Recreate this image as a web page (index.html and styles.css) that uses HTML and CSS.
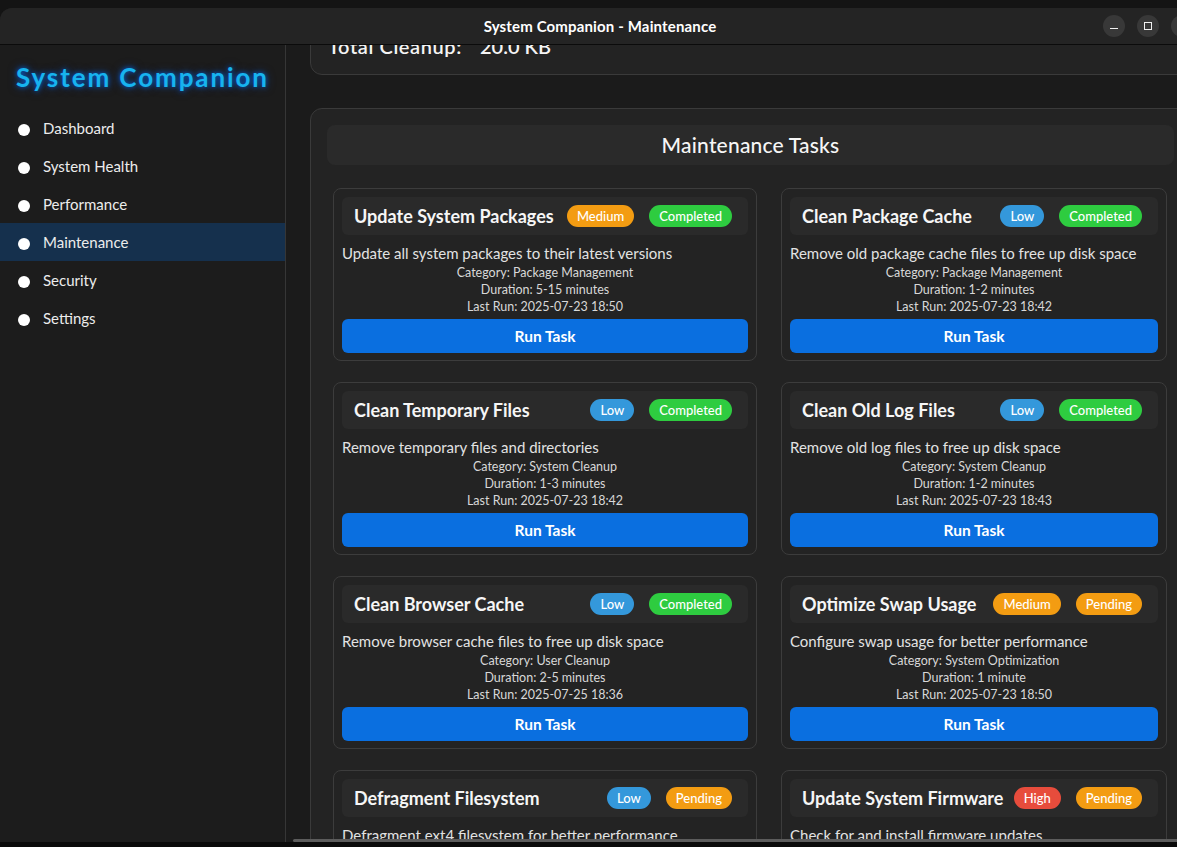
FILE: index.html
```html
<!DOCTYPE html>
<html lang="en">
<head>
<meta charset="utf-8">
<title>System Companion - Maintenance</title>
<link rel="stylesheet" href="styles.css">
</head>
<body>
<div class="desktop">
  <div class="window">
    <header class="titlebar">
      <span class="title">System Companion - Maintenance</span>
      <div class="controls">
        <span class="ctl"><span class="min-line"></span></span>
        <span class="ctl"><span class="max-box"></span></span>
        <span class="ctl"><span class="close-x">×</span></span>
      </div>
    </header>
    <div class="content">
      <aside class="sidebar">
        <div class="logo">System Companion</div>
        <nav class="nav">
          <div class="nav-item"><span class="dot"></span>Dashboard</div>
          <div class="nav-item"><span class="dot"></span>System Health</div>
          <div class="nav-item"><span class="dot"></span>Performance</div>
          <div class="nav-item active"><span class="dot"></span>Maintenance</div>
          <div class="nav-item"><span class="dot"></span>Security</div>
          <div class="nav-item"><span class="dot"></span>Settings</div>
        </nav>
      </aside>
      <main class="main">
        <div class="scroller">
          <section class="card summary">
            <div class="summary-row"><span class="summary-label">Total Cleanup:</span><span>20.0 KB</span></div>
          </section>
          <section class="card tasks">
            <div class="tasks-head">Maintenance Tasks</div>
            <div class="task-grid">
              <article class="task">
                <div class="task-head"><span class="task-title">Update System Packages</span><span class="badges"><span class="badge medium">Medium</span><span class="badge done">Completed</span></span></div>
                <p class="desc">Update all system packages to their latest versions</p>
                <p class="meta">Category: Package Management</p>
                <p class="meta">Duration: 5-15 minutes</p>
                <p class="meta">Last Run: 2025-07-23 18:50</p>
                <button class="run">Run Task</button>
              </article>
              <article class="task">
                <div class="task-head"><span class="task-title">Clean Package Cache</span><span class="badges"><span class="badge low">Low</span><span class="badge done">Completed</span></span></div>
                <p class="desc">Remove old package cache files to free up disk space</p>
                <p class="meta">Category: Package Management</p>
                <p class="meta">Duration: 1-2 minutes</p>
                <p class="meta">Last Run: 2025-07-23 18:42</p>
                <button class="run">Run Task</button>
              </article>
              <article class="task">
                <div class="task-head"><span class="task-title">Clean Temporary Files</span><span class="badges"><span class="badge low">Low</span><span class="badge done">Completed</span></span></div>
                <p class="desc">Remove temporary files and directories</p>
                <p class="meta">Category: System Cleanup</p>
                <p class="meta">Duration: 1-3 minutes</p>
                <p class="meta">Last Run: 2025-07-23 18:42</p>
                <button class="run">Run Task</button>
              </article>
              <article class="task">
                <div class="task-head"><span class="task-title">Clean Old Log Files</span><span class="badges"><span class="badge low">Low</span><span class="badge done">Completed</span></span></div>
                <p class="desc">Remove old log files to free up disk space</p>
                <p class="meta">Category: System Cleanup</p>
                <p class="meta">Duration: 1-2 minutes</p>
                <p class="meta">Last Run: 2025-07-23 18:43</p>
                <button class="run">Run Task</button>
              </article>
              <article class="task">
                <div class="task-head"><span class="task-title">Clean Browser Cache</span><span class="badges"><span class="badge low">Low</span><span class="badge done">Completed</span></span></div>
                <p class="desc">Remove browser cache files to free up disk space</p>
                <p class="meta">Category: User Cleanup</p>
                <p class="meta">Duration: 2-5 minutes</p>
                <p class="meta">Last Run: 2025-07-25 18:36</p>
                <button class="run">Run Task</button>
              </article>
              <article class="task">
                <div class="task-head"><span class="task-title">Optimize Swap Usage</span><span class="badges"><span class="badge medium">Medium</span><span class="badge pending">Pending</span></span></div>
                <p class="desc">Configure swap usage for better performance</p>
                <p class="meta">Category: System Optimization</p>
                <p class="meta">Duration: 1 minute</p>
                <p class="meta">Last Run: 2025-07-23 18:50</p>
                <button class="run">Run Task</button>
              </article>
              <article class="task">
                <div class="task-head"><span class="task-title">Defragment Filesystem</span><span class="badges"><span class="badge low">Low</span><span class="badge pending">Pending</span></span></div>
                <p class="desc">Defragment ext4 filesystem for better performance</p>
                <p class="meta">Category: System Optimization</p>
                <p class="meta">Duration: 10-30 minutes</p>
                <p class="meta">Last Run: Never</p>
                <button class="run">Run Task</button>
              </article>
              <article class="task">
                <div class="task-head"><span class="task-title">Update System Firmware</span><span class="badges"><span class="badge high">High</span><span class="badge pending">Pending</span></span></div>
                <p class="desc">Check for and install firmware updates</p>
                <p class="meta">Category: System Updates</p>
                <p class="meta">Duration: 5-10 minutes</p>
                <p class="meta">Last Run: Never</p>
                <button class="run">Run Task</button>
              </article>
            </div>
          </section>
        </div>
        <div class="hscroll"></div>
      </main>
    </div>
  </div>
  <div class="dock-strip"></div>
</div>
</body>
</html>
```
FILE: styles.css
```css
* { box-sizing: border-box; margin: 0; padding: 0; }

html, body {
  width: 1177px;
  height: 847px;
  overflow: hidden;
  background: #141414;
  font-family: Lato, "Noto Sans", sans-serif;
  color: #ffffff;
}

.desktop {
  height: 847px;
  display: flex;
  flex-direction: column;
  padding-top: 8px;
}

.window {
  width: 1200px;
  height: 834px;
  flex: none;
  border-radius: 12px 12px 0 0;
  background: #1c1c1c;
  overflow: hidden;
  display: flex;
  flex-direction: column;
}

.titlebar {
  height: 37px;
  flex: none;
  background: #242424;
  border-bottom: 1px solid #0b0b0b;
  display: grid;
  grid-template-columns: 1fr auto 1fr;
  align-items: center;
  padding: 0 7px;
}

.title {
  grid-column: 2;
  font-size: 15px;
  font-weight: 700;
  letter-spacing: 0.15px;
  color: #ffffff;
}

.controls {
  grid-column: 3;
  justify-self: end;
  display: flex;
  gap: 12px;
}

.ctl {
  width: 22px;
  height: 22px;
  border-radius: 50%;
  background: #383838;
  display: flex;
  align-items: center;
  justify-content: center;
}

.min-line {
  width: 8px;
  height: 1.5px;
  background: #f0f0f0;
  margin-top: 5px;
}

.max-box {
  width: 8px;
  height: 8px;
  border: 1px solid #f0f0f0;
}

.close-x {
  font-size: 14px;
  line-height: 1;
  color: #f0f0f0;
}

.content {
  flex: 1;
  min-height: 0;
  display: flex;
}

.sidebar {
  width: 286px;
  flex: none;
  background: #1c1c1c;
  border-right: 1px solid #363636;
}

.logo {
  height: 64px;
  padding-left: 16px;
  display: flex;
  align-items: center;
  font-size: 26px;
  font-weight: 700;
  letter-spacing: 1.9px;
  color: #17b3ef;
  text-shadow: 0 0 5px rgba(0, 110, 255, 0.8), 0 0 10px rgba(0, 90, 220, 0.5);
}

.nav-item {
  height: 38px;
  display: flex;
  align-items: center;
  gap: 13px;
  padding-left: 18px;
  font-size: 15px;
  color: #ececec;
}

.nav-item.active { background: #15304d; }

.dot {
  width: 12px;
  height: 12px;
  border-radius: 50%;
  background: #ffffff;
  margin-top: 3px;
}

.main {
  flex: 1;
  min-width: 0;
  position: relative;
  overflow: hidden;
  background: #1b1b1b;
}

.scroller {
  margin-top: -28px;
  padding: 0 9px 0 24px;
  display: flex;
  flex-direction: column;
  gap: 33px;
}

.card {
  background: #232323;
  border: 1px solid #3a3a3a;
  border-radius: 12px;
}

.summary { padding: 16px 17px; }

.summary-row {
  display: flex;
  font-size: 20px;
  font-weight: 600;
  line-height: 24px;
  color: #f4f4f4;
}

.summary-label {
  width: 152px;
  letter-spacing: 0.6px;
}

.tasks { padding: 16px; }

.tasks-head {
  height: 40px;
  background: #2a2a2a;
  border-radius: 8px;
  display: flex;
  align-items: center;
  justify-content: center;
  font-size: 21px;
  font-weight: 500;
  letter-spacing: 0.2px;
  color: #f6f6f6;
  padding-bottom: 1px;
}

.task-grid {
  display: grid;
  grid-template-columns: 424px 386px;
  column-gap: 24px;
  row-gap: 21px;
  margin: 23px 6px 0;
}

.task {
  height: 173px;
  background: #232323;
  border: 1px solid #3c3c3c;
  border-radius: 8px;
  padding: 8px;
  display: flex;
  flex-direction: column;
}

.task-head {
  height: 38px;
  flex: none;
  background: #2a2a2a;
  border-radius: 6px;
  display: flex;
  align-items: center;
  padding: 0 16px 0 12px;
}

.task-title {
  flex: 1;
  font-size: 18px;
  font-weight: 700;
  color: #f6f6f6;
}

.badges {
  display: flex;
  gap: 15px;
}

.badge {
  height: 22px;
  padding: 0 10px;
  border-radius: 11px;
  display: flex;
  align-items: center;
  font-size: 13px;
  font-weight: 500;
  color: #ffffff;
}

.badge.low { background: #3498db; }
.badge.medium { background: #f39c12; }
.badge.high { background: #e74c3c; }
.badge.done { background: #2ecc40; }
.badge.pending { background: #f39c12; }

.desc {
  margin-top: 8px;
  font-size: 15px;
  line-height: 20px;
  color: #e2e2e2;
}

.meta {
  text-align: center;
  font-size: 12.5px;
  line-height: 17px;
  color: #d8d8d8;
}

.meta:nth-of-type(2) { margin-top: 1px; }

.run {
  margin-top: 4px;
  height: 34px;
  flex: none;
  border: 0;
  border-radius: 6px;
  background: #0a6fe0;
  color: #ffffff;
  font-family: Lato, "Noto Sans", sans-serif;
  font-size: 15.5px;
  font-weight: 700;
}

.hscroll {
  position: absolute;
  left: 7px;
  right: 0;
  bottom: 0;
  height: 3px;
  border-radius: 2px;
  background: #5c5c5c;
}

.dock-strip {
  height: 5px;
  flex: none;
  background: #0a0a0a;
}
```
